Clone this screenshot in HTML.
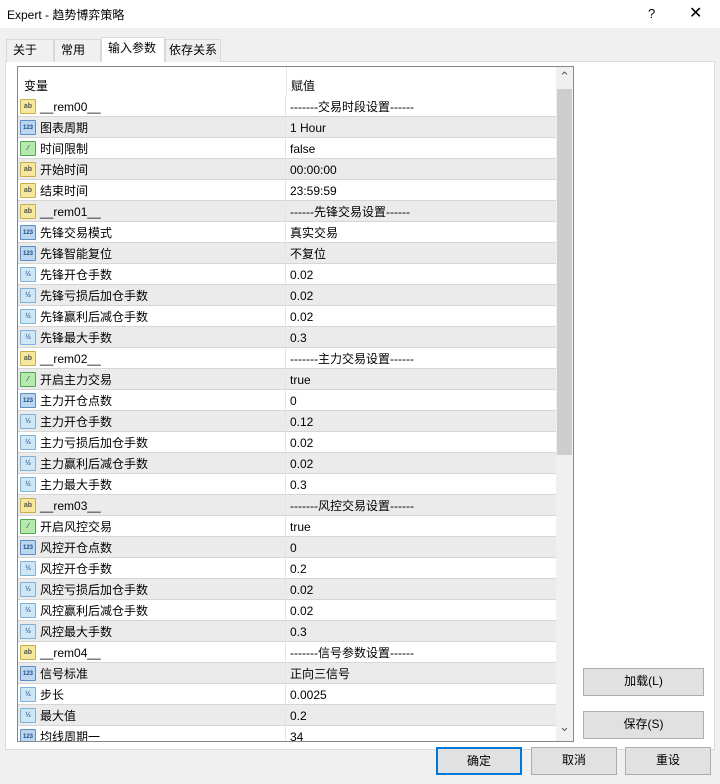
<!DOCTYPE html>
<html><head><meta charset="utf-8"><style>
*{margin:0;padding:0;box-sizing:border-box}
body{width:720px;height:784px;background:#f0f0f0;font-family:"Liberation Sans","Noto Sans CJK SC",sans-serif;font-size:12px;color:#000;position:relative;overflow:hidden}
.a{position:absolute}
.title{left:0;top:0;width:720px;height:28px;background:#fff}
.tab{top:39px;height:23px;border:1px solid #d9d9d9;border-bottom:none;background:#f0f0f0;padding-left:6px;line-height:21px}
.panel{left:5px;top:61px;width:710px;height:689px;background:#fff;border:1px solid #d9d9d9}
.list{left:17px;top:66px;width:557px;height:676px;border:1px solid #828790;background:#fff;overflow:hidden}
.row{position:absolute;left:0;width:538px;height:21px;border-bottom:1px solid #d6d6d6;line-height:22px}
.row.g{background:#ebebeb}
.row .n{position:absolute;left:22px;top:0}
.row .v{position:absolute;left:272px;top:0}
.row .s{position:absolute;left:267px;top:0;width:1px;height:21px;background:#e5e5e5}
.ic{position:absolute;left:2px;top:3px;width:16px;height:15px;border-radius:1px;font-size:7px;line-height:14px;text-align:center;font-weight:bold}
.ab{background:#f5e6a0;border:1px solid #c8b048;color:#555}
.i1{background:#bcd6f0;border:1px solid #5a8ec8;color:#1a4a8a;font-size:6px}
.bo{background:#b8e8b0;border:1px solid #50a850;color:#207020}
.hf{background:#cfe6f5;border:1px solid #7fb0d8;color:#3a6ea8}
.btn{background:#e1e1e1;border:1px solid #adadad;text-align:center;line-height:25px}
</style></head><body>
<div class="a title"></div>
<div class="a" style="left:7px;top:6px;font-size:12px">Expert - 趋势博弈策略</div>
<div class="a" style="left:648px;top:6px;font-size:13px">?</div>
<div class="a" style="left:689px;top:3px;font-size:16px">✕</div>
<div class="a panel"></div>
<div class="a tab" style="left:6px;width:48px">关于</div>
<div class="a tab" style="left:54px;width:47px;padding-left:6px">常用</div>
<div class="a tab" style="left:101px;top:37px;height:25px;width:64px;background:#fff;border-color:#d9d9d9">输入参数</div>
<div class="a tab" style="left:165px;width:56px;padding-left:3px">依存关系</div>
<div class="a list">
<div class="a" style="left:6px;top:10px">变量</div>
<div class="a" style="left:268px;top:0;width:1px;height:30px;background:#e5e5e5"></div>
<div class="a" style="left:273px;top:10px">赋值</div>
<div id="rows"></div>
<div class="a" style="left:538px;top:0;width:17px;height:676px;background:#f0f0f0"></div>
<div class="a" style="left:539px;top:22px;width:15px;height:366px;background:#cdcdcd"></div>
<div class="a" style="left:541px;top:2px;font-size:13px;color:#606060">⌃</div>
<div class="a" style="left:541px;top:652px;font-size:13px;color:#606060">⌄</div>
</div>
<div class="a btn" style="left:583px;top:668px;width:121px;height:28px">加载(L)</div>
<div class="a btn" style="left:583px;top:711px;width:121px;height:28px">保存(S)</div>
<div class="a btn" style="left:436px;top:747px;width:86px;height:28px;border:2px solid #0078d7;line-height:24px">确定</div>
<div class="a btn" style="left:531px;top:747px;width:86px;height:28px">取消</div>
<div class="a btn" style="left:625px;top:747px;width:86px;height:28px">重设</div>
<script>
var d=[["ab","__rem00__","-------交易时段设置------"],["i1","图表周期","1 Hour"],["bo","时间限制","false"],["ab","开始时间","00:00:00"],["ab","结束时间","23:59:59"],["ab","__rem01__","------先锋交易设置------"],["i1","先锋交易模式","真实交易"],["i1","先锋智能复位","不复位"],["hf","先锋开仓手数","0.02"],["hf","先锋亏损后加仓手数","0.02"],["hf","先锋赢利后减仓手数","0.02"],["hf","先锋最大手数","0.3"],["ab","__rem02__","-------主力交易设置------"],["bo","开启主力交易","true"],["i1","主力开仓点数","0"],["hf","主力开仓手数","0.12"],["hf","主力亏损后加仓手数","0.02"],["hf","主力赢利后减仓手数","0.02"],["hf","主力最大手数","0.3"],["ab","__rem03__","-------风控交易设置------"],["bo","开启风控交易","true"],["i1","风控开仓点数","0"],["hf","风控开仓手数","0.2"],["hf","风控亏损后加仓手数","0.02"],["hf","风控赢利后减仓手数","0.02"],["hf","风控最大手数","0.3"],["ab","__rem04__","-------信号参数设置------"],["i1","信号标准","正向三信号"],["hf","步长","0.0025"],["hf","最大值","0.2"],["i1","均线周期一","34"]];
var t={ab:"ab",i1:"123",bo:"⁄",hf:"½"};var h="";
d.forEach(function(r,i){h+='<div class="row'+(i%2?' g':'')+'" style="top:'+(29+21*i)+'px"><div class="ic '+r[0]+'">'+t[r[0]]+'</div><span class="n">'+r[1]+'</span><div class="s"></div><span class="v">'+r[2]+'</span></div>';});
document.getElementById("rows").innerHTML=h;
</script>
</body></html>
